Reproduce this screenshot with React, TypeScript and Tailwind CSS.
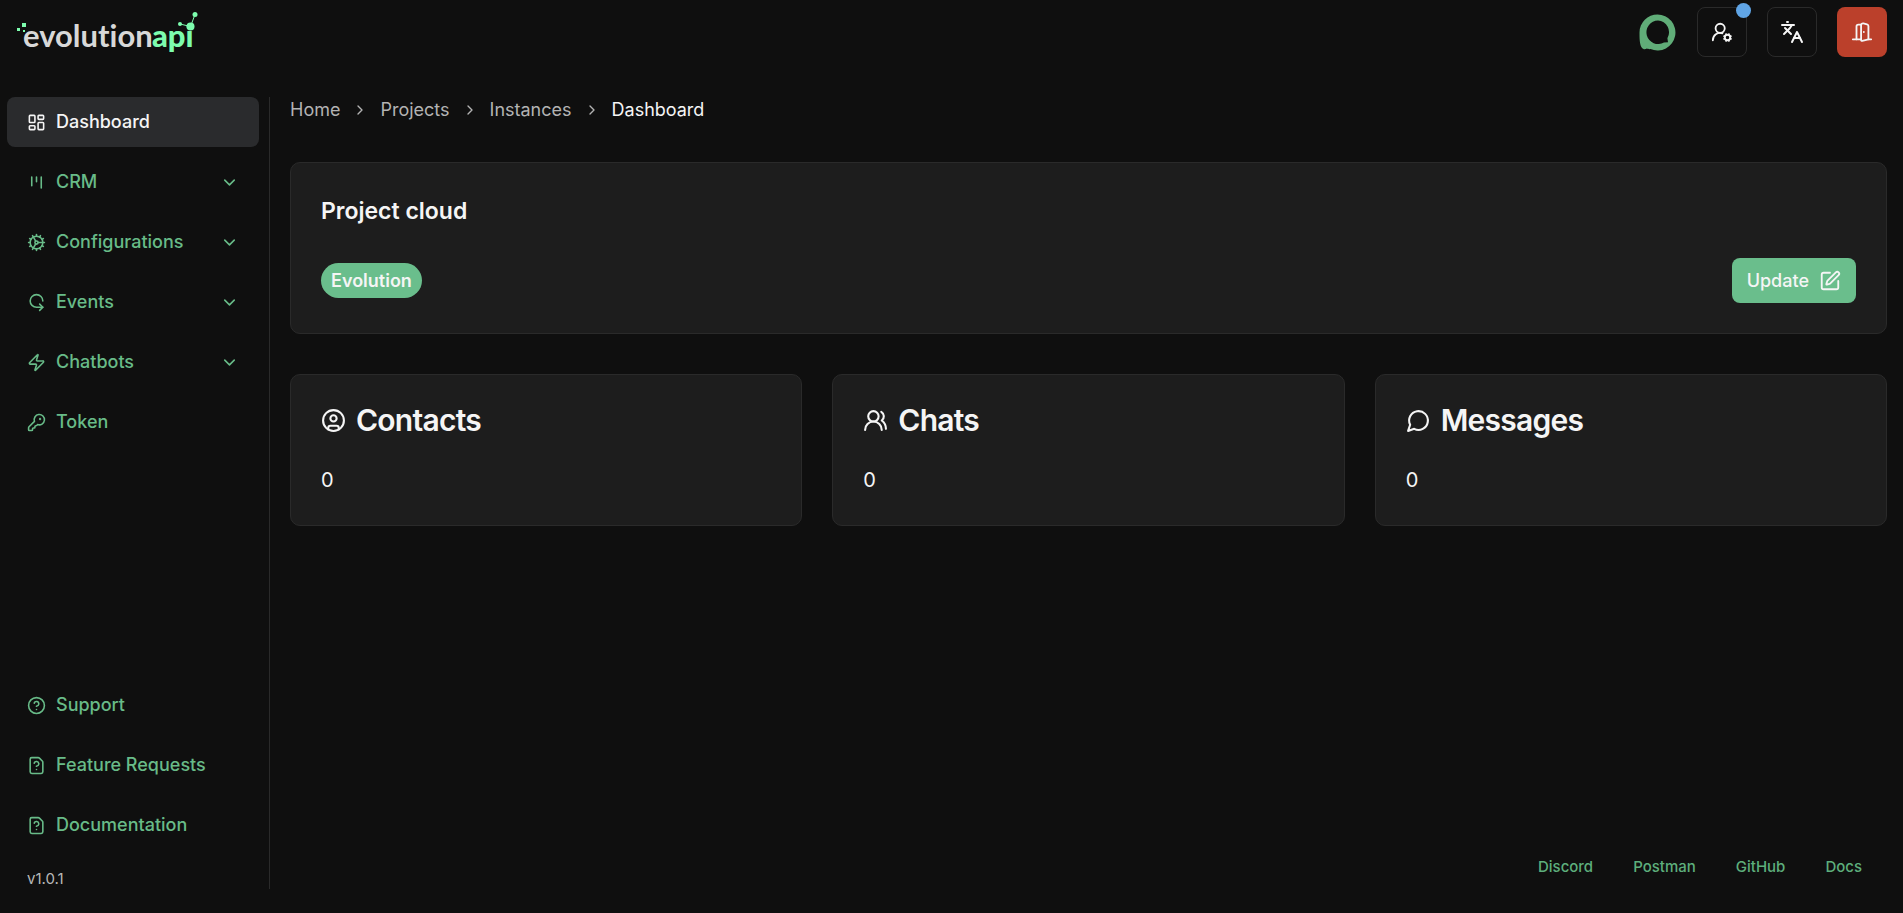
import React from 'react';
import {
  ChevronDown,
  ChevronRight,
  CircleHelp,
  CircleUser,
  Cog,
  DoorOpen,
  FileQuestion,
  IterationCcw,
  KeyRound,
  Languages,
  LayoutDashboard,
  SquarePen,
  UserRoundCog,
  UsersRound,
  Zap,
} from 'lucide-react';

interface IconProps {
  className?: string;
}

interface MenuItem {
  id: string;
  title: string;
  icon: React.ComponentType<IconProps>;
  active?: boolean;
  expandable?: boolean;
}

const svgProps = {
  viewBox: '0 0 24 24',
  fill: 'none',
  stroke: 'currentColor',
  strokeWidth: 2,
  strokeLinecap: 'round' as const,
  strokeLinejoin: 'round' as const,
};

function KanbanIcon({ className }: IconProps) {
  return (
    <svg {...svgProps} className={className}>
      <path d="M6 5v11M12 5v6M18 5v14" />
    </svg>
  );
}

function MessageIcon({ className }: IconProps) {
  return (
    <svg {...svgProps} className={className}>
      <path d="M7.9 20A9 9 0 1 0 4 16.1L2 22Z" />
    </svg>
  );
}

const mainMenu: MenuItem[] = [
  { id: 'dashboard', title: 'Dashboard', icon: LayoutDashboard, active: true },
  { id: 'crm', title: 'CRM', icon: KanbanIcon, expandable: true },
  { id: 'configurations', title: 'Configurations', icon: Cog, expandable: true },
  { id: 'events', title: 'Events', icon: IterationCcw, expandable: true },
  { id: 'chatbots', title: 'Chatbots', icon: Zap, expandable: true },
  { id: 'token', title: 'Token', icon: KeyRound },
];

const helpMenu: MenuItem[] = [
  { id: 'support', title: 'Support', icon: CircleHelp },
  { id: 'features', title: 'Feature Requests', icon: FileQuestion },
  { id: 'documentation', title: 'Documentation', icon: FileQuestion },
];

const stats = [
  { id: 'contacts', title: 'Contacts', value: 0, icon: CircleUser },
  { id: 'chats', title: 'Chats', value: 0, icon: UsersRound },
  { id: 'messages', title: 'Messages', value: 0, icon: MessageIcon },
];

const crumbs = ['Home', 'Projects', 'Instances'];
const footerLinks = ['Discord', 'Postman', 'GitHub', 'Docs'];

function Logo() {
  return (
    <svg
      viewBox="0 0 184 44"
      className="h-11 w-[184px] [font-variant-ligatures:none]"
      role="img"
      aria-label="evolutionapi"
    >
      <g fill="#7dfdae">
        <rect x="6" y="12" width="4" height="4" />
        <rect x="1" y="17" width="3" height="3" />
        <rect x="7" y="19" width="2" height="2" />
        <circle cx="164" cy="13" r="2" />
        <circle cx="174.5" cy="15.5" r="4" />
        <circle cx="179" cy="3.5" r="2.5" />
      </g>
      <path d="M164 13l10.5 2.5L179 3.5" fill="none" stroke="#7dfdae" />
      <g fontFamily="Lato, sans-serif" fontSize="31">
        <text x="7" y="36" fontWeight="700" fill="#d8d8d8">
          evolution
        </text>
        <text x="136" y="36" fontWeight="900" fill="#7dfdae">
          api
        </text>
      </g>
    </svg>
  );
}

function Avatar() {
  return (
    <svg viewBox="0 0 37 37" className="mr-px size-[37px]" aria-hidden="true">
      <path
        fill="#60ad78"
        fillRule="evenodd"
        d="M18.5 0.5a18 18 0 1 1-7 34.6c-1.8.2-2.6-.3-3.6-.6-1.3.7-2.4 1.1-3.4.6C1 33 .5 28 .5 18.5A18 18 0 0 1 18.5.5ZM19 6.5a11.8 11.8 0 1 0 6 22.1l4-.3-.6-4A11.8 11.8 0 0 0 19 6.5Z"
      />
    </svg>
  );
}

function MenuButton({ item }: { item: MenuItem }) {
  const Icon = item.icon;
  return (
    <button
      type="button"
      className={`flex h-[50px] w-full items-center rounded-lg px-5 text-lg font-medium ${
        item.active ? 'bg-[#2a2b2d] text-[#f5f5f5]' : 'text-[#68bb88]'
      }`}
    >
      <Icon className="mr-2.5 size-[19px]" />
      <span>{item.title}</span>
      {item.expandable && <ChevronDown className="ml-auto size-[19px]" />}
    </button>
  );
}

export default function App() {
  return (
    <div className="flex min-h-screen flex-col bg-[#0f0f0f] font-['Inter',sans-serif] text-lg text-[#f5f5f5]">
      <header className="flex items-start justify-between px-4 pt-[7px]">
        <a href="#" className="pt-1">
          <Logo />
        </a>
        <div className="flex items-center gap-5">
          <Avatar />
          <button
            type="button"
            aria-label="Account settings"
            className="relative flex size-[50px] items-center justify-center rounded-lg border border-[#2a2a2a]"
          >
            <UserRoundCog className="size-[22px]" />
            <span className="absolute -top-[5px] -right-[5px] size-[15px] rounded-full bg-[#60a5e6]" />
          </button>
          <button
            type="button"
            aria-label="Language"
            className="flex size-[50px] items-center justify-center rounded-lg border border-[#2a2a2a]"
          >
            <Languages className="size-6" />
          </button>
          <button
            type="button"
            aria-label="Log out"
            className="flex size-[50px] items-center justify-center rounded-lg bg-[#bb402b]"
          >
            <DoorOpen className="size-[22px]" />
          </button>
        </div>
      </header>

      <div className="mt-10 mb-6 flex flex-1 pr-4 pl-[7px]">
        <aside className="flex w-[263px] shrink-0 flex-col border-r border-[#2a2a2a] pr-2.5">
          <nav className="flex flex-1 flex-col gap-2.5">
            {mainMenu.map((item) => (
              <MenuButton key={item.id} item={item} />
            ))}
            <div className="mt-auto flex flex-col gap-2.5">
              {helpMenu.map((item) => (
                <MenuButton key={item.id} item={item} />
              ))}
            </div>
          </nav>
          <p className="mt-[19px] px-5 text-[15px] leading-5 text-[#b8b8b8]">v1.0.1</p>
        </aside>

        <div className="flex flex-1 flex-col pl-5">
          <nav aria-label="Breadcrumb" className="flex items-center gap-3 leading-[26px] text-[#b3b3b3]">
            {crumbs.map((crumb) => (
              <React.Fragment key={crumb}>
                <a href="#">{crumb}</a>
                <ChevronRight className="size-4" />
              </React.Fragment>
            ))}
            <span className="text-[#f5f5f5]">Dashboard</span>
          </nav>

          <main className="mt-[39px] flex flex-col gap-10">
            <section className="rounded-[10px] border border-[#2a2a2a] bg-[#1d1d1d] p-[30px]">
              <h1 className="text-[23px] leading-9 font-semibold">Project cloud</h1>
              <div className="mt-[29px] flex items-center justify-between">
                <span className="rounded-full bg-[#6abe8c] px-2.5 leading-[35px] font-semibold">
                  Evolution
                </span>
                <button
                  type="button"
                  className="flex h-[45px] items-center gap-2.5 rounded-lg bg-[#6abe8c] px-[15px] font-medium"
                >
                  Update
                  <SquarePen className="size-[22px]" />
                </button>
              </div>
            </section>

            <section className="grid grid-cols-3 gap-[30px]">
              {stats.map(({ id, title, value, icon: Icon }) => (
                <div key={id} className="rounded-[10px] border border-[#2a2a2a] bg-[#1d1d1d] p-[30px]">
                  <h2 className="flex items-center gap-2.5 text-3xl leading-[30px] font-semibold tracking-tight">
                    <Icon className="size-[25px]" />
                    {title}
                  </h2>
                  <p className="mt-[30px] text-xl leading-[30px]">{value}</p>
                </div>
              ))}
            </section>
          </main>

          <footer className="mt-auto flex justify-end gap-10 pr-[25px] pb-3 text-[15px] leading-5 font-medium text-[#5dae7c]">
            {footerLinks.map((link) => (
              <a key={link} href="#">
                {link}
              </a>
            ))}
          </footer>
        </div>
      </div>
    </div>
  );
}
